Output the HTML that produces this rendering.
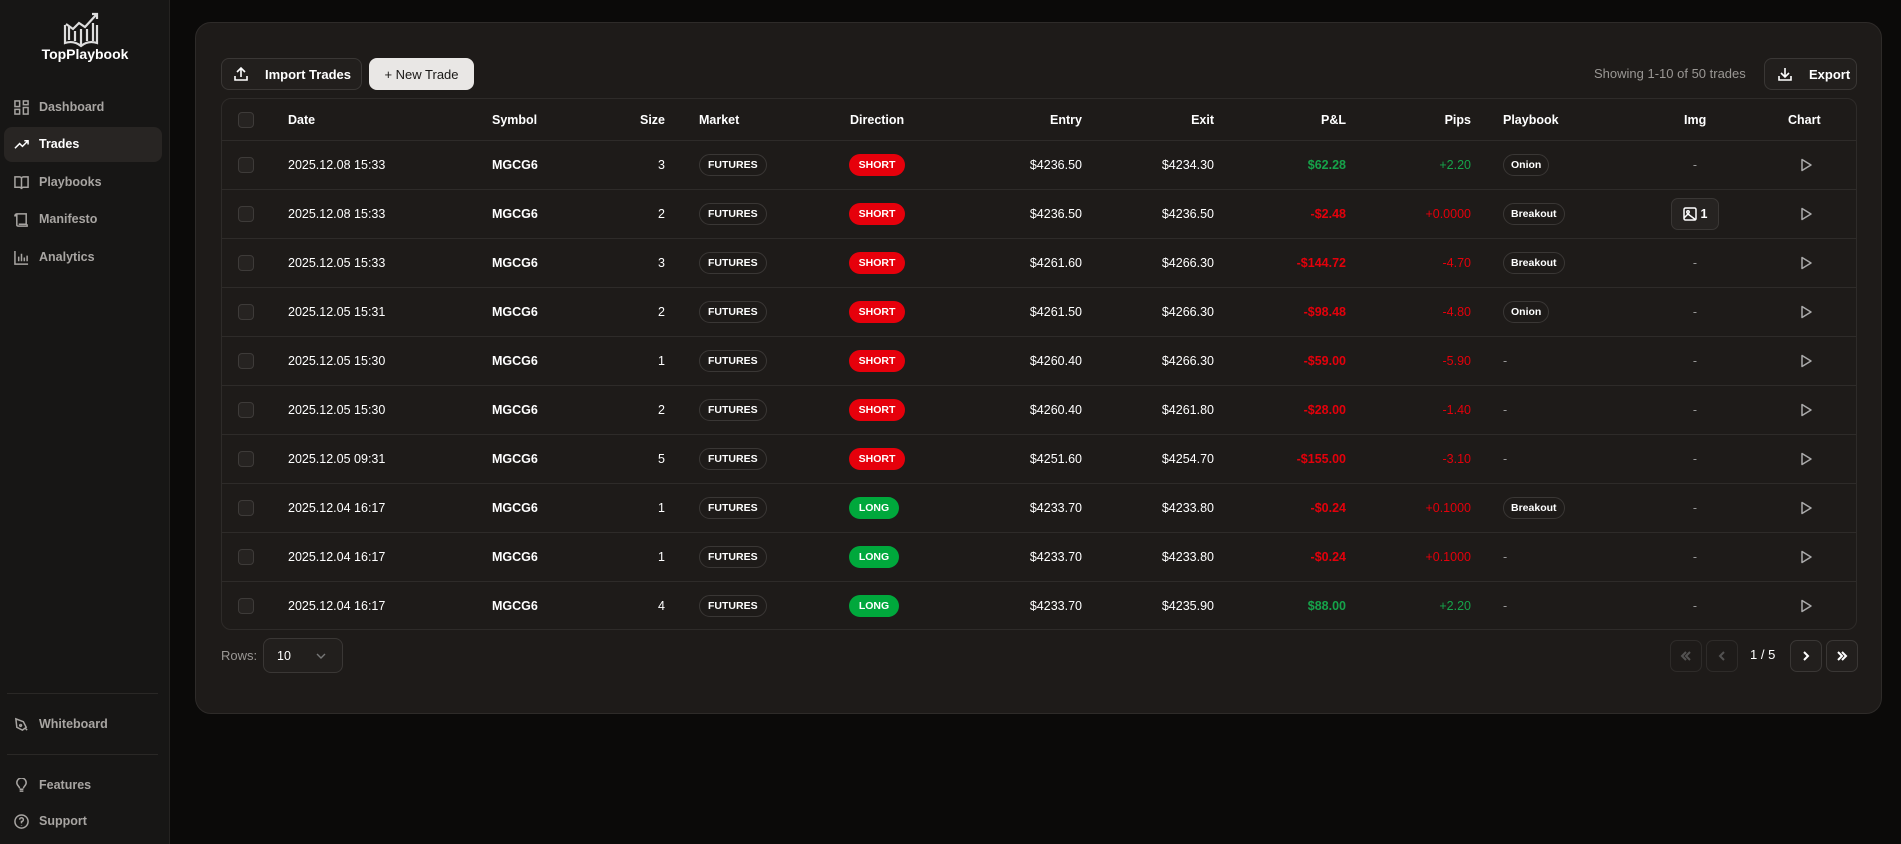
<!DOCTYPE html>
<html><head><meta charset="utf-8"><style>
*{box-sizing:border-box;margin:0;padding:0}
body{width:1901px;height:844px;background:#0b0a09;font-family:"Liberation Sans",sans-serif;color:#fff;position:relative;overflow:hidden;font-size:12.5px}
.sb{position:absolute;left:0;top:0;width:170px;height:844px;background:#171615;border-right:1px solid #252321}
.nav{position:absolute;left:14px;font-size:12.5px;color:#a8a5a2;font-weight:bold;display:flex;align-items:center;gap:10px;height:20px}
.nav svg{width:15px;height:15px;stroke:#a8a5a2;fill:none;stroke-width:1.6;flex-shrink:0}
.card{position:absolute;left:195px;top:22px;width:1687px;height:692px;background:#1e1b19;border:1px solid #2e2b29;border-radius:16px}
.btn{position:absolute;border:1px solid #3a3735;border-radius:8px;background:#221f1d;font-weight:bold;font-size:13px;display:flex;align-items:center}
.btn svg{flex-shrink:0}
.tbl{position:absolute;left:221px;top:98px;width:1636px;height:532px;border:1px solid #2e2b29;border-radius:10px}
.row{position:absolute;left:0;width:100%;border-top:1px solid #2e2b29;height:49px}
.c{position:absolute;top:0;height:100%;display:flex;align-items:center;white-space:nowrap}
.r{justify-content:flex-end}
.cb{width:16px;height:16px;border:1px solid #3e3b39;border-radius:4px;background:#262321}
.fut{border:1px solid #3a3735;border-radius:11px;font-size:10.5px;font-weight:bold;padding:0 8px;height:22px;line-height:20px}
.sh{background:#e6000b;border-radius:11px;font-size:10.5px;font-weight:bold;width:56px;height:22px;line-height:22px;text-align:center}
.lg{background:#00a83c;border-radius:11px;font-size:10.5px;font-weight:bold;width:50px;height:22px;line-height:22px;text-align:center}
.pb{border:1px solid #3a3735;border-radius:11px;font-size:10.5px;font-weight:bold;padding:0 7px;height:22px;line-height:20px}
.red{color:#e4000b}.grn{color:#16a34a}
.pg{position:absolute;top:640px;width:32px;height:32px;border:1px solid #3a3735;border-radius:7px;display:flex;align-items:center;justify-content:center}
.pg svg{width:14px;height:14px;fill:none;stroke-width:2}
</style></head><body>
<div class="sb">
<svg style="position:absolute;left:62px;top:11px" width="38" height="37" viewBox="0 0 38 37" fill="none" stroke="#ddd" stroke-width="2.2"><path d="M3 14v18c6-2 11-1 16 3c5-4 10-5 16-3V14"/><path d="M19 35V18"/><path d="M7 16v13M13 20v10M25 18v12M31 12v18"/><path d="M4 13l7 5 6-6 6 4 11-12"/><path d="M30 3h5v5"/></svg>
<div style="position:absolute;left:0;width:170px;top:46px;text-align:center;font-weight:bold;font-size:14px">TopPlaybook</div>
<div style="position:absolute;left:4px;top:127px;width:158px;height:35px;background:#282523;border-radius:8px"></div>
<div class="nav" style="top:97px"><svg viewBox="0 0 16 16"><rect x="1" y="1" width="5" height="6"/><rect x="10" y="1" width="5" height="4"/><rect x="1" y="10" width="5" height="5"/><rect x="10" y="8" width="5" height="7"/></svg>Dashboard</div>
<div class="nav" style="top:134px;color:#fff"><svg viewBox="0 0 16 16" style="stroke:#fff"><path d="M1 12l5-5 3 3 6-6M11 4h4v4"/></svg>Trades</div>
<div class="nav" style="top:172px"><svg viewBox="0 0 16 16"><path d="M1 2h5c1 0 2 1 2 2v11c0-1-1-2-2-2H1zM15 2h-5c-1 0-2 1-2 2v11c0-1 1-2 2-2h5z"/></svg>Playbooks</div>
<div class="nav" style="top:209px"><svg viewBox="0 0 16 16"><path d="M3 2h10v11H5M3 2c-1 0-2 1-2 2h2M3 2v12c0 1 1 1 2 1h9v-2"/></svg>Manifesto</div>
<div class="nav" style="top:247px"><svg viewBox="0 0 16 16"><path d="M1 1v14h14M5 12V7M8 12V4M11 12V8M14 12V6"/></svg>Analytics</div>
<div style="position:absolute;left:7px;top:693px;width:151px;border-top:1px solid #2a2826"></div>
<div class="nav" style="top:714px"><svg viewBox="0 0 16 16"><path d="M2 2l8 3 3 6-4 3-6-3zM7 8a1 1 0 1 0 .1 0M12 12l2 2"/></svg>Whiteboard</div>
<div style="position:absolute;left:7px;top:754px;width:151px;border-top:1px solid #2a2826"></div>
<div class="nav" style="top:775px"><svg viewBox="0 0 16 16"><path d="M6 14h4M6 12h4M6 11c0-2-3-3-3-6a5 5 0 0 1 10 0c0 3-3 4-3 6"/></svg>Features</div>
<div class="nav" style="top:811px"><svg viewBox="0 0 16 16"><circle cx="8" cy="8" r="7"/><path d="M6 6a2 2 0 1 1 2 2v2M8 12v.5"/></svg>Support</div>
</div>
<div class="card"></div>
<div class="btn" style="left:221px;top:58px;width:141px;height:32px;padding-left:11px"><svg width="16" height="16" viewBox="0 0 16 16" fill="none" stroke="#fff" stroke-width="1.6"><path d="M2 10v4h12v-4M8 11V2M4 6l4-4 4 4"/></svg><span style="margin-left:16px">Import Trades</span></div>
<div class="btn" style="left:369px;top:58px;width:105px;height:32px;background:#e9e7e5;color:#1a1816;font-weight:normal;justify-content:center;border-color:#e9e7e5">+ New Trade</div>
<div style="position:absolute;left:1594px;top:66px;color:#9a9794;font-size:13px">Showing 1-10 of 50 trades</div>
<div class="btn" style="left:1764px;top:58px;width:93px;height:32px;padding-left:12px"><svg width="16" height="16" viewBox="0 0 16 16" fill="none" stroke="#fff" stroke-width="1.6"><path d="M2 10v4h12v-4M8 2v9M4 7l4 4 4-4"/></svg><span style="margin-left:16px">Export</span></div>
<div class="tbl">
<div style="position:absolute;top:0;left:0;width:100%;height:41px;font-weight:bold">
<div class="c" style="left:16px"><div class="cb"></div></div>
<div class="c" style="left:66px">Date</div><div class="c" style="left:270px">Symbol</div>
<div class="c r" style="right:1191px">Size</div><div class="c" style="left:477px">Market</div>
<div class="c" style="left:628px">Direction</div><div class="c r" style="right:774px">Entry</div>
<div class="c r" style="right:642px">Exit</div><div class="c r" style="right:510px">P&amp;L</div>
<div class="c r" style="right:385px">Pips</div><div class="c" style="left:1281px">Playbook</div>
<div class="c" style="left:1462px">Img</div><div class="c" style="left:1566px">Chart</div>
</div>
<div id="rows"></div>
</div>
<div style="position:absolute;left:221px;top:648px;color:#9a9794;font-size:13px">Rows:</div>
<div style="position:absolute;left:263px;top:638px;width:80px;height:35px;border:1px solid #3a3735;border-radius:8px;background:#221f1d;display:flex;align-items:center;padding-left:13px">10<svg style="position:absolute;left:52px;top:13px" width="10" height="8" viewBox="0 0 10 8" fill="none" stroke="#777" stroke-width="1.4"><path d="M1 2l4 4 4-4"/></svg></div>
<div class="pg" style="left:1670px;opacity:.6"><svg viewBox="0 0 14 14" stroke="#777"><path d="M7 3L3 7l4 4M11 3L7 7l4 4"/></svg></div>
<div class="pg" style="left:1706px;opacity:.6"><svg viewBox="0 0 14 14" stroke="#777"><path d="M9 3L5 7l4 4"/></svg></div>
<div style="position:absolute;left:1750px;top:647px;font-size:13px">1 / 5</div>
<div class="pg" style="left:1790px;background:#221f1d"><svg viewBox="0 0 14 14" stroke="#fff"><path d="M5 3l4 4-4 4"/></svg></div>
<div class="pg" style="left:1826px;background:#221f1d"><svg viewBox="0 0 14 14" stroke="#fff"><path d="M3 3l4 4-4 4M7 3l4 4-4 4"/></svg></div>
<script>
var d=[["2025.12.08 15:33",3,"S","$4236.50","$4234.30","$62.28","+2.20","Onion",0],
["2025.12.08 15:33",2,"S","$4236.50","$4236.50","-$2.48","+0.0000","Breakout",1],
["2025.12.05 15:33",3,"S","$4261.60","$4266.30","-$144.72","-4.70","Breakout",0],
["2025.12.05 15:31",2,"S","$4261.50","$4266.30","-$98.48","-4.80","Onion",0],
["2025.12.05 15:30",1,"S","$4260.40","$4266.30","-$59.00","-5.90","",0],
["2025.12.05 15:30",2,"S","$4260.40","$4261.80","-$28.00","-1.40","",0],
["2025.12.05 09:31",5,"S","$4251.60","$4254.70","-$155.00","-3.10","",0],
["2025.12.04 16:17",1,"L","$4233.70","$4233.80","-$0.24","+0.1000","Breakout",0],
["2025.12.04 16:17",1,"L","$4233.70","$4233.80","-$0.24","+0.1000","",0],
["2025.12.04 16:17",4,"L","$4233.70","$4235.90","$88.00","+2.20","",0]];
var h="";d.forEach(function(r,i){var pc=r[5][0]=="-"?"red":"grn";
h+='<div class="row" style="top:'+(41+i*49)+'px">'+
'<div class="c" style="left:16px"><div class="cb"></div></div>'+
'<div class="c" style="left:66px">'+r[0]+'</div><div class="c" style="left:270px;font-weight:bold">MGCG6</div>'+
'<div class="c r" style="right:1191px">'+r[1]+'</div><div class="c" style="left:477px"><span class="fut">FUTURES</span></div>'+
'<div class="c" style="left:627px">'+(r[2]=="S"?'<span class="sh">SHORT</span>':'<span class="lg">LONG</span>')+'</div>'+
'<div class="c r" style="right:774px">'+r[3]+'</div><div class="c r" style="right:642px">'+r[4]+'</div>'+
'<div class="c r '+pc+'" style="right:510px;font-weight:bold">'+r[5]+'</div><div class="c r '+pc+'" style="right:385px">'+r[6]+'</div>'+
'<div class="c" style="left:1281px">'+(r[7]?'<span class="pb">'+r[7]+'</span>':'<span style="color:#999">-</span>')+'</div>'+
'<div class="c" style="left:1450px;width:46px;justify-content:center">'+(r[8]?'<span style="border:1px solid #3a3735;border-radius:7px;background:#262321;width:48px;height:32px;display:flex;align-items:center;justify-content:center;font-weight:bold;gap:4px;flex-shrink:0"><svg width="14" height="14" viewBox="0 0 14 14" fill="none" stroke="#fff" stroke-width="1.5"><rect x="1" y="1" width="12" height="12" rx="1.5"/><circle cx="5" cy="5" r="1.2"/><path d="M1 11l4-4 8 6"/></svg>1</span>':'<span style="color:#999">-</span>')+'</div>'+
'<div class="c" style="left:1577px"><svg width="14" height="14" viewBox="0 0 14 14" fill="none" stroke="#aaa" stroke-width="1.5"><path d="M3 1.5l9 5.5-9 5.5z" stroke-linejoin="round"/></svg></div></div>';});
document.getElementById("rows").innerHTML=h;
</script>
</body></html>
